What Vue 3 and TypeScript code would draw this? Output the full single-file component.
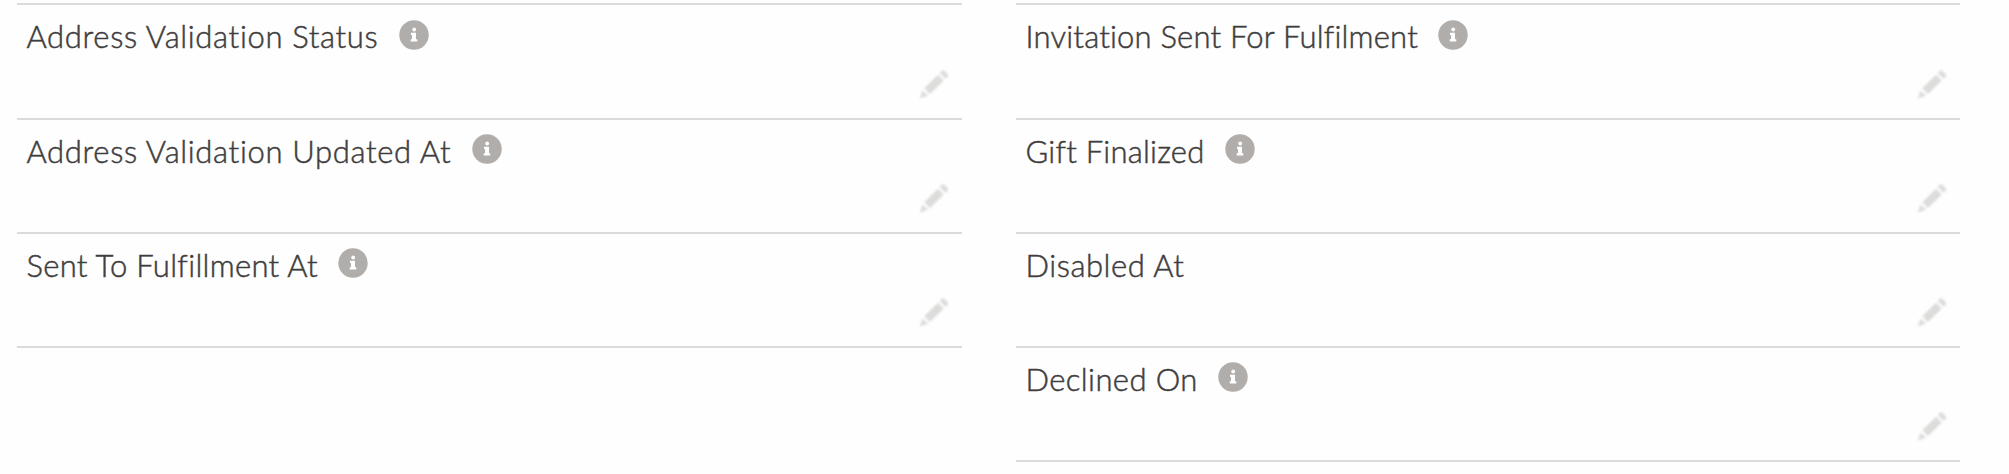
<script setup lang="ts">
interface Field {
  label: string
  info: boolean
  spacing: number
}

const columns: Field[][] = [
  [
    { label: 'Address Validation Status', info: true, spacing: 0.66 },
    { label: 'Address Validation Updated At', info: true, spacing: 0.66 },
    { label: 'Sent To Fulfillment At', info: true, spacing: 0.305 },
  ],
  [
    { label: 'Invitation Sent For Fulfilment', info: true, spacing: 0.2 },
    { label: 'Gift Finalized', info: true, spacing: 0.23 },
    { label: 'Disabled At', info: false, spacing: 0.55 },
    { label: 'Declined On', info: true, spacing: 0.41 },
  ],
]
</script>

<template>
  <main class="details">
    <section v-for="(fields, c) in columns" :key="c" class="column">
      <div v-for="field in fields" :key="field.label" class="field">
        <div class="heading">
          <span class="label" :style="{ letterSpacing: field.spacing + 'px' }">{{ field.label }}</span>
          <svg v-if="field.info" class="info" viewBox="0 0 30 30" aria-hidden="true">
            <circle cx="15" cy="15" r="14.7" fill="#b0adab" />
            <circle cx="15.2" cy="9.5" r="1.9" fill="#fff" />
            <path d="M12 12.8h5v6.4h1.3v2.3h-6.6v-2.3H13v-4.100h-1z" fill="#fff" />
          </svg>
        </div>
        <svg class="pencil" viewBox="0 0 32 32" aria-hidden="true">
          <g fill="#dddcdb">
            <path d="M2 30.500L4.300 22.800L10.300 27.600Z" />
            <path d="M6.300 20.300L19.200 7.400Q20 6.800 20.800 7.500L25 11.700Q25.600 12.400 25 13.200L12 26.100Z" />
            <path d="M21.700 4.900L23.600 2.800Q25 1.600 26.500 2.900L29.700 6.200Q30.800 7.700 29.600 9L27.600 10.800Z" />
          </g>
        </svg>
      </div>
    </section>
  </main>
</template>

<style>
body {
  margin: 0;
  background: #fefefe;
}
</style>

<style scoped>
.details {
  box-sizing: border-box;
  width: 2009px;
  height: 474px;
  padding: 3px 49px 0 17px;
  display: grid;
  grid-template-columns: 945px 944px;
  column-gap: 54px;
  align-items: start;
  overflow: hidden;
  background: #fefefe;
}

.column {
  border-top: 2px solid #dbdbdb;
}

.field {
  box-sizing: border-box;
  height: 114px;
  padding: 11px 12px 0 9.5px;
  display: flex;
  flex-direction: column;
  border-bottom: 2px solid #dbdbdb;
}

.field:first-child {
  height: 115px;
}

.heading {
  display: flex;
  align-items: flex-start;
  gap: 20.5px;
  height: 51px;
}

.field:first-child .heading {
  height: 52px;
}

.label {
  font: 300 31px/40px Lato, "Open Sans", sans-serif;
  font-variant-ligatures: none;
  -webkit-text-stroke: 0.5px #3e3d3d;
  color: #3e3d3d;
  white-space: nowrap;
}

.info {
  width: 30px;
  height: 30px;
  margin-top: 3px;
}

.field:first-child .info {
  margin-top: 4px;
}

.pencil {
  width: 32px;
  height: 32px;
  align-self: flex-end;
  filter: blur(0.8px);
}
</style>
